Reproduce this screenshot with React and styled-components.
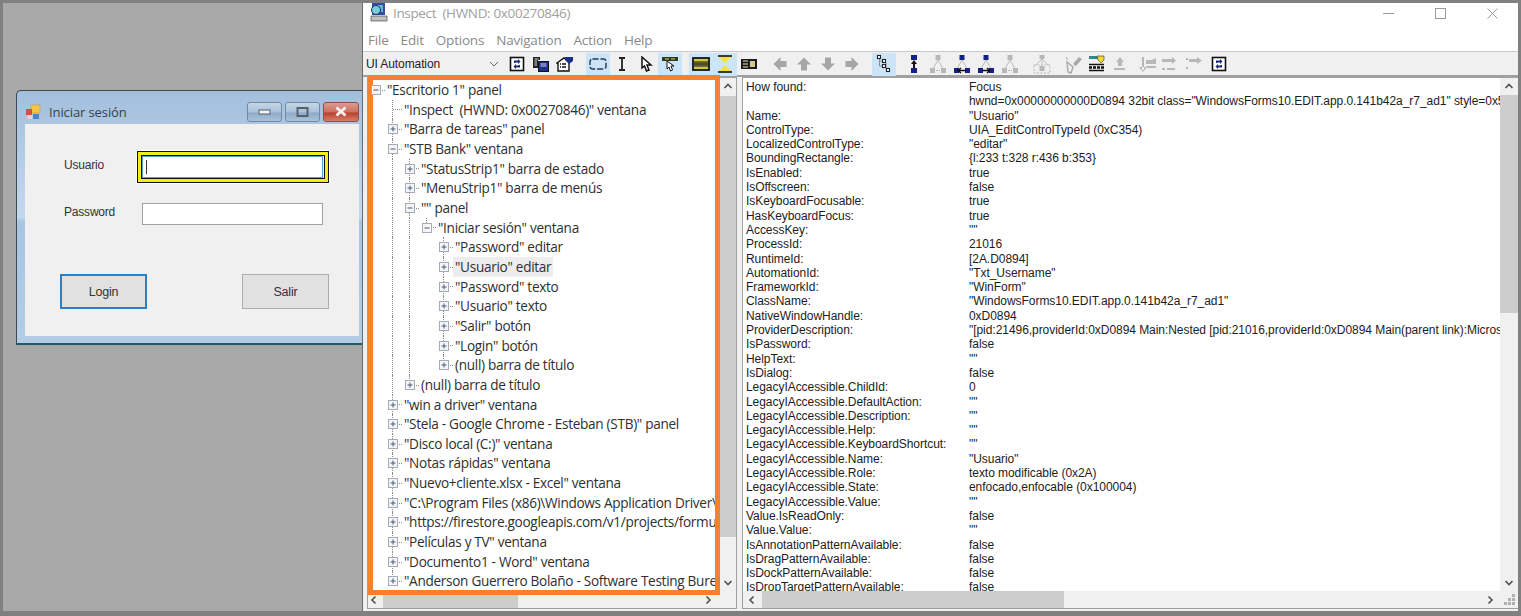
import React from 'react';
import styled, { createGlobalStyle } from 'styled-components';

const GlobalStyle = createGlobalStyle`
  html, body {
    margin: 0;
    padding: 0;
    height: 616px;
    overflow: hidden;
    background: #808080;
  }
  * {
    box-sizing: border-box;
  }
`;

const treeData = [
  [0, '"Escritorio 1" panel', 'minus'],
  [1, '"Inspect  (HWND: 0x00270846)" ventana'],
  [1, '"Barra de tareas" panel', 'plus'],
  [1, '"STB Bank" ventana', 'minus'],
  [2, '"StatusStrip1" barra de estado', 'plus'],
  [2, '"MenuStrip1" barra de menús', 'plus'],
  [2, '"" panel', 'minus'],
  [3, '"Iniciar sesión" ventana', 'minus'],
  [4, '"Password" editar', 'plus'],
  [4, '"Usuario" editar', 'plus', true],
  [4, '"Password" texto', 'plus'],
  [4, '"Usuario" texto', 'plus'],
  [4, '"Salir" botón', 'plus'],
  [4, '"Login" botón', 'plus'],
  [4, '(null) barra de título', 'plus'],
  [2, '(null) barra de título', 'plus'],
  [1, '"win a driver" ventana', 'plus'],
  [1, '"Stela - Google Chrome - Esteban (STB)" panel', 'plus'],
  [1, '"Disco local (C:)" ventana', 'plus'],
  [1, '"Notas rápidas" ventana', 'plus'],
  [1, '"Nuevo+cliente.xlsx - Excel" ventana', 'plus'],
  [1, '"C:\\Program Files (x86)\\Windows Application Driver\\', 'plus'],
  [1, '"https://firestore.googleapis.com/v1/projects/formul', 'plus'],
  [1, '"Películas y TV" ventana', 'plus'],
  [1, '"Documento1 - Word" ventana', 'plus'],
  [1, '"Anderson Guerrero Bolaño - Software Testing Burea', 'plus'],
];

const properties = [
  ['How found:', 'Focus'],
  ['', 'hwnd=0x00000000000D0894 32bit class="WindowsForms10.EDIT.app.0.141b42a_r7_ad1" style=0x56'],
  ['Name:', '"Usuario"'],
  ['ControlType:', 'UIA_EditControlTypeId (0xC354)'],
  ['LocalizedControlType:', '"editar"'],
  ['BoundingRectangle:', '{l:233 t:328 r:436 b:353}'],
  ['IsEnabled:', 'true'],
  ['IsOffscreen:', 'false'],
  ['IsKeyboardFocusable:', 'true'],
  ['HasKeyboardFocus:', 'true'],
  ['AccessKey:', '""'],
  ['ProcessId:', '21016'],
  ['RuntimeId:', '[2A.D0894]'],
  ['AutomationId:', '"Txt_Username"'],
  ['FrameworkId:', '"WinForm"'],
  ['ClassName:', '"WindowsForms10.EDIT.app.0.141b42a_r7_ad1"'],
  ['NativeWindowHandle:', '0xD0894'],
  ['ProviderDescription:', '"[pid:21496,providerId:0xD0894 Main:Nested [pid:21016,providerId:0xD0894 Main(parent link):Micros'],
  ['IsPassword:', 'false'],
  ['HelpText:', '""'],
  ['IsDialog:', 'false'],
  ['LegacyIAccessible.ChildId:', '0'],
  ['LegacyIAccessible.DefaultAction:', '""'],
  ['LegacyIAccessible.Description:', '""'],
  ['LegacyIAccessible.Help:', '""'],
  ['LegacyIAccessible.KeyboardShortcut:', '""'],
  ['LegacyIAccessible.Name:', '"Usuario"'],
  ['LegacyIAccessible.Role:', 'texto modificable (0x2A)'],
  ['LegacyIAccessible.State:', 'enfocado,enfocable (0x100004)'],
  ['LegacyIAccessible.Value:', '""'],
  ['Value.IsReadOnly:', 'false'],
  ['Value.Value:', '""'],
  ['IsAnnotationPatternAvailable:', 'false'],
  ['IsDragPatternAvailable:', 'false'],
  ['IsDockPatternAvailable:', 'false'],
  ['IsDropTargetPatternAvailable:', 'false'],
];

const Page = styled.div`
  display: flex;
  width: 1521px;
  height: 616px;
  padding: 3px 3px 5px 3px;
  background: #808080;
  overflow: hidden;
`;

const Desktop = styled.div`
  flex: 0 0 359px;
  padding: 87px 0 0 13px;
  background: #a9a9a9;
`;

const LoginWindow = styled.div`
  display: flex;
  flex-direction: column;
  width: 346px;
  height: 255px;
  padding: 0 3px 7px 8px;
  border: 1px solid #3d4a52;
  border-right: 0;
  border-bottom: 2px solid #1f5a66;
  border-radius: 5px 0 0 0;
  background: linear-gradient(180deg, #a3bfdc 0%, #c4d9ee 50%, #a8c4e0 52%, #b4cde6 100%);
`;

const LoginTitleBar = styled.div`
  display: flex;
  align-items: center;
  flex: 0 0 33px;
  padding-top: 8px;
  font: 13px 'Open Sans', sans-serif;
  letter-spacing: -0.1px;
  color: #34424f;
`;

const LoginTitle = styled.span`
  margin-left: 6px;
  flex: 1;
`;

const CaptionButtons = styled.div`
  display: flex;
  gap: 3px;
`;

const CaptionButton = styled.div`
  display: flex;
  align-items: center;
  justify-content: center;
  width: ${props => (props.$close ? 36 : 35)}px;
  height: 20px;
  border: 1px solid ${props => (props.$close ? '#8e5048' : '#6f8aa6')};
  border-radius: 3px;
  background: ${props => (props.$close
    ? 'linear-gradient(180deg, #dc9b90 0%, #cf6f60 50%, #b8402c 55%, #d47f6c 100%)'
    : 'linear-gradient(180deg, #c5d6e8 0%, #aac2da 50%, #8eaac8 55%, #a9c3dc 100%)')};
`;

const LoginBody = styled.div`
  display: flex;
  flex-direction: column;
  flex: 1;
  padding: 32px 0 0 39px;
  background: #f0f0f0;
`;

const FieldRow = styled.div`
  display: flex;
  align-items: center;
  height: 22px;
  margin-bottom: ${props => props.$gap}px;
`;

const FieldLabel = styled.span`
  width: 78px;
  margin-top: -5px;
  font: 12px 'Liberation Sans', sans-serif;
  letter-spacing: -0.2px;
  color: #333;
`;

const TextInput = styled.div`
  position: relative;
  display: flex;
  align-items: center;
  width: 181px;
  height: 22px;
  padding-left: 3px;
  background: #fff;
  border: 1px solid ${props => (props.$focused ? '#5a9fd4' : '#a0a0a0')};
`;

const FocusRing = styled.div`
  position: absolute;
  inset: -6px -7px -6px -6px;
  border: 1px solid #111;
  outline: 1px solid #fff;
  box-shadow: inset 0 0 0 3px #f2ee1a, inset 0 0 0 4px #111;
  pointer-events: none;
`;

const Caret = styled.span`
  width: 1px;
  height: 14px;
  background: #333;
`;

const ButtonRow = styled.div`
  display: flex;
  justify-content: space-between;
  width: 269px;
  margin: 49px 0 0 -4px;
`;

const FormButton = styled.div`
  display: flex;
  align-items: center;
  justify-content: center;
  width: 87px;
  height: 35px;
  font: 12.5px 'Liberation Sans', sans-serif;
  letter-spacing: -0.2px;
  color: #333;
  background: #e1e1e1;
  border: ${props => (props.$active ? '2px solid #2c7fc4' : '1px solid #adadad')};
`;

const InspectWindow = styled.div`
  position: relative;
  display: flex;
  flex-direction: column;
  flex: 1;
  min-width: 0;
  background: #fff;
  border-left: 1px solid #6a6a6a;
`;

const TitleBar = styled.div`
  display: flex;
  align-items: center;
  height: 23px;
  padding: 0 0 3px 6px;
  font: 13.5px 'Open Sans', sans-serif;
  letter-spacing: -0.35px;
  color: #a0a0a0;
`;

const TitleText = styled.span`
  margin-left: 4px;
  flex: 1;
  white-space: pre;
`;

const WindowControls = styled.div`
  display: flex;
  align-items: center;
`;

const WindowControl = styled.div`
  display: flex;
  justify-content: center;
  width: 52px;
  color: #9a9a9a;
`;

const MenuBar = styled.div`
  display: flex;
  align-items: center;
  gap: 12px;
  height: 25px;
  padding: 3px 0 0 5px;
  font: 13.5px 'Open Sans', sans-serif;
  letter-spacing: -0.2px;
  color: #8a8a8a;
`;

const Toolbar = styled.div`
  display: flex;
  align-items: center;
  height: 26px;
  padding: 1px 0 0 3px;
  background: #f0f0f0;
  border-top: 1px solid #c8c8c8;
  border-bottom: 2px solid #a0a0a0;
`;

const ComboBox = styled.div`
  display: flex;
  align-items: center;
  justify-content: space-between;
  flex: 0 0 133px;
  height: 20px;
  margin-right: 6px;
  font: 12px 'Liberation Sans', sans-serif;
  letter-spacing: -0.1px;
  color: #222;
`;

const ToolButton = styled.div`
  display: flex;
  align-items: center;
  justify-content: center;
  flex: 0 0 24px;
  height: 23px;
  background: ${props => (props.$on ? '#cce4f7' : 'transparent')};
`;

const ToolGap = styled.div`
  flex: 0 0 ${props => props.$w}px;
`;

const Panes = styled.div`
  display: flex;
  flex: 1;
  min-height: 0;
  padding: 0 0 2px 4px;
  background: #f0f0f0;
`;

const TreePane = styled.div`
  display: grid;
  grid-template-columns: 1fr 17px;
  grid-template-rows: 1fr 17px;
  width: 370px;
  border: 1px solid #a0a0a0;
  background: #fff;
`;

const PropsPane = styled.div`
  display: grid;
  grid-template-columns: 1fr 18px;
  grid-template-rows: 1fr 17px;
  flex: 1;
  min-width: 0;
  margin-left: 5px;
  border: 1px solid #a0a0a0;
  border-right: 0;
  background: #fff;
`;

const TreeScroll = styled.div`
  overflow: hidden;
  padding: 2px 0 0 0;
`;

const TreeRow = styled.div`
  display: flex;
  align-items: stretch;
  height: 19.66px;
  white-space: pre;
`;

const GuideCell = styled.div`
  position: relative;
  flex: 0 0 17px;

  &::before {
    content: '';
    position: absolute;
    left: 7px;
    top: 0;
    bottom: ${props => (props.$half ? '50%' : '0')};
    display: ${props => (props.$line ? 'block' : 'none')};
    border-left: 1px dotted #8a8a8a;
  }

  &::after {
    content: '';
    position: absolute;
    left: 8px;
    right: 0;
    top: 50%;
    display: ${props => (props.$dash ? 'block' : 'none')};
    border-top: 1px dotted #8a8a8a;
  }
`;

const Expander = styled.svg`
  position: absolute;
  left: 3px;
  top: 5px;
  z-index: 1;
`;

const TreeLabel = styled.span`
  padding: 0 2px;
  font: 13.6px/19.66px 'Open Sans', sans-serif;
  letter-spacing: -0.3px;
  color: #2f2f2f;
  background: ${props => (props.$selected ? '#ededed' : 'transparent')};
`;

const PropsScroll = styled.div`
  overflow: hidden;
  padding: 2px 0 0 3px;
`;

const PropRow = styled.div`
  display: grid;
  grid-template-columns: 223px 1fr;
  height: 14.3px;
  font: 12px/14.3px 'Liberation Sans', sans-serif;
  letter-spacing: -0.05px;
  color: #1c1c1c;
  white-space: nowrap;
`;

const PropValue = styled.span`
  overflow: hidden;
`;

const ScrollBar = styled.div`
  position: relative;
  display: flex;
  flex-direction: ${props => (props.$vertical ? 'column' : 'row')};
  align-items: center;
  justify-content: space-between;
  padding-right: ${props => props.$endPad || 0}px;
  background: #f0f0f0;
  overflow: hidden;
`;

const ScrollThumb = styled.div`
  position: absolute;
  background: #cdcdcd;
  ${props => (props.$vertical
    ? `left: 0; right: 0; top: ${props.$start}px; height: ${props.$size}px;`
    : `top: 0; bottom: 0; left: ${props.$start}px; width: ${props.$size}px;`)}
`;

const ScrollArrow = styled.div`
  z-index: 1;
  display: flex;
  align-items: center;
  justify-content: center;
  width: 17px;
  height: 17px;
  margin-left: ${props => props.$shift || 0}px;
`;

const Corner = styled.div`
  display: flex;
  align-items: flex-end;
  justify-content: flex-end;
  padding: 0 2px 2px 0;
  background: #f0f0f0;
`;

const Highlight = styled.div`
  position: absolute;
  left: 5px;
  top: 72px;
  width: 352px;
  height: 520px;
  border: 5px solid #f5812c;
  pointer-events: none;
`;

function Chevron({ dir }) {
  const paths = {
    up: 'M1.5 6 L5 2.5 L8.5 6',
    down: 'M1.5 3 L5 6.5 L8.5 3',
    left: 'M6.5 1.5 L3 5 L6.5 8.5',
    right: 'M3.5 1.5 L7 5 L3.5 8.5',
  };
  return (
    <svg width="10" height="10" viewBox="0 0 10 10">
      <path d={paths[dir]} fill="none" stroke="#505050" strokeWidth="1.6" />
    </svg>
  );
}

function TreeBox({ kind }) {
  return (
    <Expander width="10" height="10" viewBox="0 0 10 10">
      <rect x="0.5" y="0.5" width="9" height="9" fill="#f4f5f7" stroke="#a4abb4" />
      <path d="M2.5 5 H7.5" stroke="#4a5a78" />
      {kind === 'plus' && <path d="M5 2.5 V7.5" stroke="#4a5a78" />}
    </Expander>
  );
}

function hasNextAt(index, level) {
  for (let i = index + 1; i < treeData.length; i += 1) {
    if (treeData[i][0] < level) return false;
    if (treeData[i][0] === level) return true;
  }
  return false;
}

function TreeRows() {
  return treeData.map(([level, label, kind, selected], index) => {
    const guides = [];
    for (let k = 0; k < level; k += 1) {
      guides.push(<GuideCell key={k} $line={hasNextAt(index, k)} />);
    }
    return (
      <TreeRow key={label + index}>
        {guides}
        <GuideCell
          $line={level > 0}
          $half={!hasNextAt(index, level)}
          $dash
        >
          {kind && <TreeBox kind={kind} />}
        </GuideCell>
        <TreeLabel $selected={selected}>{label}</TreeLabel>
      </TreeRow>
    );
  });
}

// toolbar glyphs, all on a 16px grid
const Refresh = () => (
  <svg width="16" height="16" viewBox="0 0 16 16">
    <rect x="1.5" y="1.5" width="13" height="13" fill="#fff" stroke="#111" strokeWidth="1.6" />
    <path d="M5 7 V4.5 H9 V3 L11.5 5.5 L9 8 V6.5 H6.5 V7Z M11 9 V11.5 H7 V13 L4.5 10.5 L7 8 V9.5 H9.5 V9Z" fill="#1a2a7a" />
  </svg>
);

const Copy = () => (
  <svg width="18" height="16" viewBox="0 0 18 16">
    <path d="M1 1 H8 V4 H6 V12 H1Z" fill="#222" />
    <path d="M2.5 3 H6.5 M2.5 5 H5 M2.5 7 H5 M2.5 9 H5" stroke="#ddd" />
    <rect x="6.5" y="5.5" width="10" height="10" fill="#1c2f8c" stroke="#111" />
    <path d="M8.5 8 H14.5 M8.5 10 H14.5" stroke="#cfd6ef" />
  </svg>
);

const Tree = () => (
  <svg width="18" height="16" viewBox="0 0 18 16">
    <path d="M1 7 L8 2 L13 6 V15 H2 V7Z" fill="#fff" stroke="#111" strokeWidth="1.4" />
    <path d="M6 8 H10 M6 11 H10 M4 8 H5 M4 11 H5" stroke="#111" strokeWidth="1.4" />
    <path d="M9 1 H17 V5 L13 8 L9 4Z" fill="#1c2f8c" />
  </svg>
);

const Dashed = () => (
  <svg width="18" height="12" viewBox="0 0 18 12">
    <rect x="1" y="1" width="16" height="10" rx="2.5" fill="none" stroke="#2a3450" strokeWidth="1.4" strokeDasharray="6 2" />
  </svg>
);

const Beam = () => (
  <svg width="10" height="14" viewBox="0 0 10 14">
    <path d="M2 1 H8 M2 13 H8 M5 1 V13" stroke="#222" strokeWidth="1.8" fill="none" />
  </svg>
);

const Pointer = () => (
  <svg width="14" height="16" viewBox="0 0 14 16">
    <path d="M3 1 L12 9 H8 L10 14 L7.5 15 L5.5 10 L3 12Z" fill="#fff" stroke="#111" strokeWidth="1.5" />
  </svg>
);

const Hilite = () => (
  <svg width="18" height="18" viewBox="0 0 18 18">
    <rect x="1" y="2" width="16" height="4" fill="#2c3a20" />
    <path d="M4 4 H8 M10 4 H14" stroke="#d8d24a" />
    <path d="M6 6 L13 11 H10 L11.5 15 L9.5 16 L8 12 L6 14Z" fill="#fff" stroke="#111" />
  </svg>
);

const FrameIcon = () => (
  <svg width="18" height="14" viewBox="0 0 18 14">
    <rect x="1" y="1" width="16" height="12" fill="#cfc93f" stroke="#161616" strokeWidth="1.8" />
    <path d="M2 5 H16 M2 9 H16" stroke="#161616" />
    <rect x="2" y="5.5" width="14" height="3" fill="#4a4a30" />
  </svg>
);

const Hourglass = () => (
  <svg width="16" height="18" viewBox="0 0 16 18">
    <path d="M1 1 H15 L8 8Z" fill="#f2e23a" />
    <path d="M1 1 H15" stroke="#111" strokeWidth="1.6" />
    <path d="M1 17 H15 L8 10Z" fill="#f2e23a" />
    <path d="M1 17 H15" stroke="#111" strokeWidth="1.6" />
  </svg>
);

const Badge = () => (
  <svg width="18" height="12" viewBox="0 0 18 12">
    <rect x="1" y="1" width="16" height="10" fill="#1c1c1c" />
    <path d="M3 3 H8 M3 6 H8 M3 9 H8" stroke="#e8e6a0" strokeWidth="1.2" />
    <rect x="10" y="3" width="5" height="6" fill="#cfcd8a" />
  </svg>
);

const Arrow = ({ rotate }) => (
  <svg width="16" height="16" viewBox="0 0 16 16" style={{ transform: `rotate(${rotate}deg)` }}>
    <path d="M8 1.5 L15 8.5 H11 V14.5 H5 V8.5 H1Z" fill="#a6a6a6" />
  </svg>
);

const Hierarchy = () => (
  <svg width="16" height="20" viewBox="0 0 16 20">
    <path d="M3.5 3 V12 H8 M3.5 7 H8 M10 9 V15" stroke="#7d8ba0" fill="none" />
    <g fill="#fff" stroke="#222" strokeWidth="1.1">
      <rect x="1.5" y="1.5" width="3" height="3" />
      <rect x="6.5" y="5.5" width="3" height="3" />
      <rect x="6.5" y="10.5" width="3" height="3" />
      <rect x="10.5" y="14.5" width="3" height="3" />
    </g>
  </svg>
);

const NavUp = () => (
  <svg width="10" height="20" viewBox="0 0 10 20">
    <rect x="2" y="1" width="6" height="5" fill="#14208c" />
    <path d="M5 6 L8 10 H6 V14 H4 V10 H2Z" fill="#111" />
    <rect x="2" y="14" width="6" height="5" fill="#14208c" />
  </svg>
);

const TreeNav = ({ mode }) => {
  const blue = mode === 'left' || mode === 'right';
  const nodes = blue ? '#14208c' : '#b8b8b8';
  return (
    <svg width="18" height="20" viewBox="0 0 18 20">
      <rect x="6.5" y="1" width="5" height="5" fill={nodes} />
      <path d="M9 6 L4.5 14 M9 6 L13.5 14" stroke="#bdbdbd" fill="none" />
      <rect x="1" y="14" width="5" height="5" fill={nodes} />
      <rect x="12" y="14" width="5" height="5" fill={nodes} />
      {mode === 'left' && <path d="M5 16.5 H13 M8 14 L5 16.5 L8 19" stroke="#111" strokeWidth="1.5" fill="none" />}
      {mode === 'right' && <path d="M5 16.5 H13 M10 14 L13 16.5 L10 19" stroke="#111" strokeWidth="1.5" fill="none" />}
      {mode === 'dash' && <path d="M7 16.5 H11" stroke="#b8b8b8" strokeDasharray="2 1" />}
    </svg>
  );
};

const TreeWide = () => (
  <svg width="20" height="20" viewBox="0 0 20 20">
    <rect x="7.5" y="1" width="5" height="4" fill="#b8b8b8" />
    <path d="M10 5 L4 11 M10 5 L16 11 M10 5 V11" stroke="#bdbdbd" fill="none" />
    <rect x="2" y="11" width="16" height="8" fill="none" stroke="#b8b8b8" strokeDasharray="2 1.5" />
    <rect x="7.5" y="12" width="5" height="5" fill="#b8b8b8" />
  </svg>
);

const Wand = () => (
  <svg width="20" height="20" viewBox="0 0 20 20">
    <path d="M4 8 L10 13 L8 19 L5 18Z" fill="none" stroke="#a8a8a8" strokeWidth="1.4" />
    <path d="M10 10 L16 3 L19 5 L13 12Z" fill="#a8a8a8" />
    <path d="M3 3 L5 6" stroke="#a8a8a8" />
  </svg>
);

const Focus = () => (
  <svg width="18" height="18" viewBox="0 0 18 18">
    <rect x="1" y="1" width="10" height="3" fill="#2c8a8a" />
    <path d="M9 1 H16 V5 L13 8 L10 5Z" fill="#f2d92a" stroke="#333" strokeWidth="0.6" />
    <path d="M1 9.5 H16 M1 15.5 H16" stroke="#111" strokeWidth="1.6" />
    <path d="M1 12.5 H16" stroke="#111" strokeWidth="2.4" strokeDasharray="3 1" />
  </svg>
);

const GreyStep = ({ variant }) => {
  const shapes = {
    a: 'M1 13 H12 V15 H1Z M7 2 L11 7 H9 V11 H5 V7 H3Z',
    b: 'M5 2 H7 V15 H5Z M2 12 L6 17 L10 12Z M9 5 H15 L19 3 V9 H9Z M9 11 H19 V13 H9Z',
    c: 'M1 4 H11 V2 L15 5.5 L11 9 V7 H1Z M1 13 H4 V15 H1Z M6 13 H14 V15 H6Z',
    d: 'M4 4 H12 V2 L17 5.5 L12 9 V7 H4Z M1 3 H3 V5 H1Z M1 12 H3 V14 H1Z',
  };
  return (
    <svg width="20" height="18" viewBox="0 0 20 18">
      <path d={shapes[variant]} fill="#b8b8b8" />
    </svg>
  );
};

const AppIcon = () => (
  <svg width="20" height="20" viewBox="0 0 20 20">
    <rect x="3" y="0" width="13" height="12" fill="#3a4a9c" />
    <rect x="5" y="2" width="9" height="7" fill="#5bb8d8" />
    <circle cx="7" cy="7" r="4.5" fill="#79cfd9" stroke="#1a2a5a" />
    <rect x="2" y="13" width="16" height="5" fill="#c0c0c0" stroke="#333" strokeWidth="0.6" />
  </svg>
);

const FormIcon = () => (
  <svg width="18" height="16" viewBox="0 0 18 16">
    <rect x="6" y="1" width="9" height="8" fill="#f5c542" stroke="#caa02c" strokeWidth="0.6" />
    <rect x="1" y="5" width="6" height="6" fill="#d8503c" />
    <rect x="8" y="10" width="6" height="5" fill="#4a86d0" />
    <rect x="2.5" y="11" width="5" height="4" fill="#d8d8d8" />
  </svg>
);

const Grip = () => (
  <svg width="12" height="12" viewBox="0 0 12 12">
    <path d="M8 0 h3 v3 h-3z M4 4 h3 v3 h-3z M8 4 h3 v3 h-3z M0 8 h3 v3 h-3z M4 8 h3 v3 h-3z M8 8 h3 v3 h-3z" fill="#b0b0b0" />
  </svg>
);

export default function App() {
  return (
    <Page>
      <GlobalStyle />
      <Desktop>
        <LoginWindow>
          <LoginTitleBar>
            <FormIcon />
            <LoginTitle>Iniciar sesión</LoginTitle>
            <CaptionButtons>
              <CaptionButton>
                <svg width="13" height="7" viewBox="0 0 13 7">
                  <rect x="1" y="2" width="11" height="4" fill="#f2f4f7" stroke="#56606c" />
                </svg>
              </CaptionButton>
              <CaptionButton>
                <svg width="13" height="10" viewBox="0 0 13 10">
                  <rect x="1.5" y="1" width="10" height="8" fill="none" stroke="#56606c" strokeWidth="2" />
                </svg>
              </CaptionButton>
              <CaptionButton $close>
                <svg width="14" height="11" viewBox="0 0 14 11">
                  <path d="M2.5 1.5 L11.5 9.5 M11.5 1.5 L2.5 9.5" stroke="#f7f2f0" strokeWidth="3" />
                </svg>
              </CaptionButton>
            </CaptionButtons>
          </LoginTitleBar>
          <LoginBody>
            <FieldRow $gap={25}>
              <FieldLabel>Usuario</FieldLabel>
              <TextInput $focused>
                <FocusRing />
                <Caret />
              </TextInput>
            </FieldRow>
            <FieldRow $gap={0}>
              <FieldLabel>Password</FieldLabel>
              <TextInput />
            </FieldRow>
            <ButtonRow>
              <FormButton $active>Login</FormButton>
              <FormButton>Salir</FormButton>
            </ButtonRow>
          </LoginBody>
        </LoginWindow>
      </Desktop>
      <InspectWindow>
        <TitleBar>
          <AppIcon />
          <TitleText>Inspect  (HWND: 0x00270846)</TitleText>
          <WindowControls>
            <WindowControl>
              <svg width="11" height="11" viewBox="0 0 11 11">
                <path d="M0 5.5 H11" stroke="#9a9a9a" />
              </svg>
            </WindowControl>
            <WindowControl>
              <svg width="11" height="11" viewBox="0 0 11 11">
                <rect x="0.5" y="0.5" width="10" height="10" fill="none" stroke="#9a9a9a" />
              </svg>
            </WindowControl>
            <WindowControl>
              <svg width="11" height="11" viewBox="0 0 11 11">
                <path d="M0.5 0.5 L10.5 10.5 M10.5 0.5 L0.5 10.5" stroke="#9a9a9a" />
              </svg>
            </WindowControl>
          </WindowControls>
        </TitleBar>
        <MenuBar>
          <span>File</span>
          <span>Edit</span>
          <span>Options</span>
          <span>Navigation</span>
          <span>Action</span>
          <span>Help</span>
        </MenuBar>
        <Toolbar>
          <ComboBox>
            UI Automation
            <svg width="10" height="10" viewBox="0 0 10 10">
              <path d="M1 3 L5 7 L9 3" fill="none" stroke="#666" />
            </svg>
          </ComboBox>
          <ToolButton><Refresh /></ToolButton>
          <ToolButton><Copy /></ToolButton>
          <ToolButton><Tree /></ToolButton>
          <ToolGap $w={9} />
          <ToolButton $on><Dashed /></ToolButton>
          <ToolButton><Beam /></ToolButton>
          <ToolButton><Pointer /></ToolButton>
          <ToolButton $on><Hilite /></ToolButton>
          <ToolGap $w={7} />
          <ToolButton $on><FrameIcon /></ToolButton>
          <ToolButton $on><Hourglass /></ToolButton>
          <ToolButton><Badge /></ToolButton>
          <ToolGap $w={7} />
          <ToolButton><Arrow rotate={-90} /></ToolButton>
          <ToolButton><Arrow rotate={0} /></ToolButton>
          <ToolButton><Arrow rotate={180} /></ToolButton>
          <ToolButton><Arrow rotate={90} /></ToolButton>
          <ToolGap $w={8} />
          <ToolButton $on><Hierarchy /></ToolButton>
          <ToolGap $w={6} />
          <ToolButton><NavUp /></ToolButton>
          <ToolButton><TreeNav mode="dash" /></ToolButton>
          <ToolButton><TreeNav mode="left" /></ToolButton>
          <ToolButton><TreeNav mode="right" /></ToolButton>
          <ToolButton><TreeNav mode="dash" /></ToolButton>
          <ToolGap $w={8} />
          <ToolButton><TreeWide /></ToolButton>
          <ToolGap $w={7} />
          <ToolButton><Wand /></ToolButton>
          <ToolButton><Focus /></ToolButton>
          <ToolGap $w={2} />
          <ToolButton><GreyStep variant="a" /></ToolButton>
          <ToolButton><GreyStep variant="b" /></ToolButton>
          <ToolButton><GreyStep variant="c" /></ToolButton>
          <ToolButton><GreyStep variant="d" /></ToolButton>
          <ToolButton><Refresh /></ToolButton>
        </Toolbar>
        <Panes>
          <TreePane>
            <TreeScroll>
              <TreeRows />
            </TreeScroll>
            <ScrollBar $vertical>
              <ScrollThumb $vertical $start={18} $size={441} />
              <ScrollArrow><Chevron dir="up" /></ScrollArrow>
              <ScrollArrow><Chevron dir="down" /></ScrollArrow>
            </ScrollBar>
            <ScrollBar $endPad={3}>
              <ScrollThumb $start={15} $size={135} />
              <ScrollArrow $shift={-3}><Chevron dir="left" /></ScrollArrow>
              <ScrollArrow><Chevron dir="right" /></ScrollArrow>
            </ScrollBar>
            <Corner />
          </TreePane>
          <PropsPane>
            <PropsScroll>
              {properties.map(([name, value], index) => (
                <PropRow key={name + index}>
                  <span>{name}</span>
                  <PropValue>{value}</PropValue>
                </PropRow>
              ))}
            </PropsScroll>
            <ScrollBar $vertical>
              <ScrollThumb $vertical $start={17} $size={218} />
              <ScrollArrow><Chevron dir="up" /></ScrollArrow>
              <ScrollArrow><Chevron dir="down" /></ScrollArrow>
            </ScrollBar>
            <ScrollBar $endPad={2}>
              <ScrollThumb $start={19} $size={302} />
              <ScrollArrow><Chevron dir="left" /></ScrollArrow>
              <ScrollArrow><Chevron dir="right" /></ScrollArrow>
            </ScrollBar>
            <Corner><Grip /></Corner>
          </PropsPane>
        </Panes>
        <Highlight />
      </InspectWindow>
    </Page>
  );
}
